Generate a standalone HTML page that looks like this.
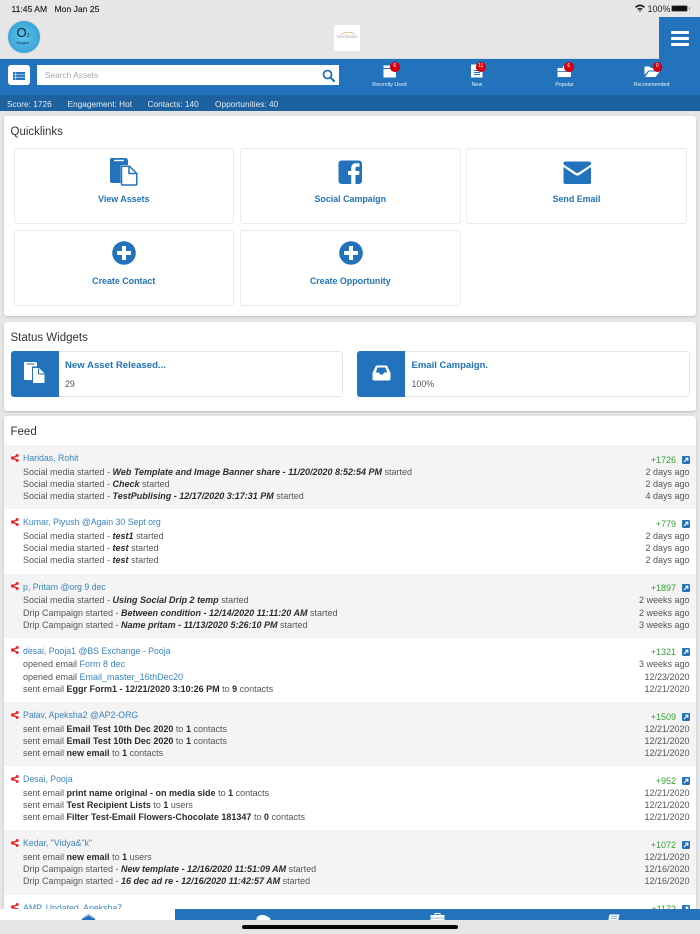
<!DOCTYPE html>
<html><head><meta charset="utf-8">
<style>
html,body{margin:0;padding:0}
body{width:700px;height:934px;position:relative;overflow:hidden;background:#e6e6e6;font-family:"Liberation Sans",sans-serif;color:#555}
div,svg{position:absolute}
.t{white-space:nowrap;line-height:12px}
.card{background:#fff;border-radius:3px;box-shadow:0 1px 2px rgba(0,0,0,.18)}
.h{font-size:11.5px;color:#333;left:10.5px;white-space:nowrap;line-height:14px}
.q{background:#fff;border:1px solid #ebebeb;border-radius:3px;box-sizing:border-box;height:76px}
.ql{position:absolute;left:0;right:0;top:44px;text-align:center;font-weight:bold;font-size:8.9px;line-height:12px;color:#2273bb}
.row{left:0;width:692px;height:64.2px}
.g{background:#f4f4f4}
.n{left:19px;top:7px;font-size:8.75px;color:#3a83c0;line-height:12px;white-space:nowrap}
.l{left:19px;font-size:9px;color:#555;line-height:12px;white-space:nowrap}
.l b{color:#2c2c2c}
.l a{color:#3a83c0}
.r{right:6.5px;font-size:9px;color:#555;line-height:12px;white-space:nowrap}
.s{right:20px;top:8.5px;font-size:9px;color:#33a033;line-height:12px;white-space:nowrap}
.l1{top:20.5px}.l2{top:33px}.l3{top:45px}
.nl{color:#fff;font-size:5.3px;line-height:8px;text-align:center;width:80px;top:80.5px;opacity:.9}
.b{width:9.5px;height:9.5px;border-radius:50%;background:#d00010;color:#fff;font-size:5px;line-height:9.5px;text-align:center;top:62px}
.top{color:#fff;font-size:8.3px;top:97.5px;line-height:12px;white-space:nowrap;opacity:.88}
</style></head><body>

<!-- status bar -->
<div class="t" style="left:11.5px;top:2.5px;font-size:8.6px;color:#222;-webkit-text-stroke:.15px #222">11:45 AM</div>
<div class="t" style="left:54.5px;top:2.5px;font-size:8.6px;color:#222;-webkit-text-stroke:.15px #222">Mon Jan 25</div>
<svg style="left:635px;top:4px" width="10" height="9" viewBox="0 0 10 9"><path d="M0 2.8C3-.3 7-.3 10 2.8L8.8 4C6.5 1.9 3.5 1.9 1.2 4Z M2.2 5C4 3.5 6 3.5 7.8 5L6.6 6.1C5.5 5.3 4.5 5.3 3.4 6.1Z M4 7L5 6.3 6 7 5 8.2Z" fill="#222"/></svg>
<div class="t" style="left:647.5px;top:2.5px;font-size:9px;color:#222">100%</div>
<div style="left:671px;top:4.5px;width:17px;height:7.5px;border-radius:2px;background:#111;border:.5px solid #999;box-sizing:border-box"></div>
<div style="left:688.5px;top:6.5px;width:1px;height:3.5px;background:#999"></div>

<!-- logos -->
<div style="left:8px;top:21px;width:32px;height:32px;border-radius:50%;background:radial-gradient(circle at 48% 50%,#5cc4ea 0,#3aa5d8 70%,#2f93c6 85%,#c9c9c9 100%);box-shadow:0 0 1px #999"></div>
<div class="t" style="left:16.5px;top:25px;font-size:13px;line-height:16px;color:#123">O<span style="font-size:5.5px">2</span></div>
<div class="t" style="left:16.5px;top:40px;font-size:3.6px;line-height:6px;color:#124">Oxygen</div>
<div style="left:334px;top:25px;width:26px;height:26px;background:#fff"></div>
<div class="t" style="left:335px;top:34px;width:24px;overflow:hidden;font-size:4.3px;line-height:6px;color:#aaa;text-align:center">mindmatrix</div>
<svg style="left:340px;top:31px" width="16" height="4" viewBox="0 0 16 4"><path d="M1 3.5Q8 -1 15 3" stroke="#e9b27a" stroke-width=".7" fill="none"/></svg>

<!-- blue nav -->
<div style="left:0;top:57.5px;width:700px;height:38px;background:#2273bb;border-top:1px solid #cfd9e3;box-sizing:border-box"></div>
<div style="left:659px;top:16.5px;width:41px;height:42px;background:#2273bb"></div>
<div style="left:670.5px;top:30.5px;width:18px;height:3px;background:#fff;border-radius:1px"></div>
<div style="left:670.5px;top:37px;width:18px;height:3px;background:#fff;border-radius:1px"></div>
<div style="left:670.5px;top:43px;width:18px;height:3px;background:#fff;border-radius:1px"></div>

<div style="left:7.5px;top:65px;width:22.5px;height:20px;background:#fff;border-radius:3px"></div>
<svg style="left:13px;top:71.5px" width="12" height="8" viewBox="0 0 12 8"><path d="M0 0h12v8H0z" fill="#2273bb"/><path d="M0 2.5h12M0 5.2h12M2.8 0v8" stroke="#fff" stroke-width=".6"/></svg>
<div style="left:37px;top:65px;width:302px;height:20px;background:#fff"></div>
<div class="t" style="left:45px;top:69px;font-size:8.3px;color:#a9a9a9">Search Assets</div>
<svg style="left:322px;top:68.5px" width="13" height="13" viewBox="0 0 13 13"><circle cx="5.5" cy="5.5" r="4" fill="none" stroke="#2273bb" stroke-width="1.8"/><path d="M8.5 8.5L12 12" stroke="#2273bb" stroke-width="2.2" stroke-linecap="round"/></svg>

<!-- nav items -->
<svg style="left:383px;top:64px" width="14" height="14" viewBox="0 0 14 14"><path d="M0.5 1.5h12v2.5h-12z" fill="#fff"/><path d="M0.5 5h12.5v8.5h-12.5z" fill="#fff"/></svg>
<div class="b" style="left:390px">6</div>
<div class="nl" style="left:349.5px">Recently Used</div>
<svg style="left:470px;top:64px" width="14" height="14" viewBox="0 0 14 14"><path d="M1 0.5h11.5v13H1z" fill="#fff"/><path d="M4 6.5h6M4 8.5h6M4 10.5h6" stroke="#2273bb" stroke-width=".9"/></svg>
<div class="b" style="left:476px">11</div>
<div class="nl" style="left:437px">New</div>
<svg style="left:557px;top:64px" width="15" height="14" viewBox="0 0 15 14"><path d="M0.5 4h13.5v9H0.5z" fill="#fff"/><path d="M0.5 7.5h13.5" stroke="#2273bb" stroke-width=".8"/><path d="M6 2h6v2H6z" fill="#fff"/></svg>
<div class="b" style="left:564px">6</div>
<div class="nl" style="left:524.5px">Popular</div>
<svg style="left:644px;top:64px" width="16" height="14" viewBox="0 0 16 14"><path d="M0.5 2.5h5l1.5 1.5h5v2.5H4.5L0.5 11Z" fill="#fff"/><path d="M5 7.5h10.5L11.5 13H1Z" fill="#fff"/></svg>
<div class="b" style="left:652.5px">0</div>
<div class="nl" style="left:611.5px">Recommended</div>

<!-- sub bar -->
<div style="left:0;top:95px;width:700px;height:16px;background:#1d629f"></div>
<div class="top" style="left:7px">Score: 1726</div>
<div class="top" style="left:67.5px">Engagement: Hot</div>
<div class="top" style="left:147.5px">Contacts: 140</div>
<div class="top" style="left:215px">Opportunities: 40</div>

<!-- Quicklinks -->
<div class="card" style="left:4px;top:116px;width:692px;height:200px"></div>
<div class="h" style="top:125px">Quicklinks</div>

<div class="q" style="left:13.5px;top:148px;width:220.5px"><div class="ql">View Assets</div>
<svg style="left:95.5px;top:9px" width="28" height="28" viewBox="0 0 28 28"><path d="M0 1.5Q0 0 1.5 0H15Q18 0 18 3V7H10.5V25H2Q0 25 0 23Z" fill="#2273bb"/><path d="M4 2.5H14" stroke="#fff" stroke-width="1.4"/><path d="M11.5 8.2H19.5L26.8 15.5V26Q26.8 27 25.8 27H12.5Q11.5 27 11.5 26Z" fill="#fff" stroke="#2273bb" stroke-width="1.5"/><path d="M19 8.5V15.5H26.5" fill="none" stroke="#2273bb" stroke-width="1.5"/></svg></div>
<div class="q" style="left:240px;top:148px;width:220.5px"><div class="ql">Social Campaign</div>
<svg style="left:97px;top:10.5px" width="25" height="25" viewBox="0 0 25 25"><path d="M4 .5H20.5Q24 .5 24 4V20.5Q24 24 20.5 24H17.5V15H21L21.5 11H17.5V8.5Q17.5 6.8 19.3 6.8H21.5V3.2H18Q13.2 3.2 13.2 8V11H10V15H13.2V24H4Q.5 24 .5 20.5V4Q.5 .5 4 .5Z" fill="#2273bb"/></svg></div>
<div class="q" style="left:466px;top:148px;width:221px"><div class="ql">Send Email</div>
<svg style="left:95.5px;top:12px" width="29" height="24" viewBox="0 0 29 24"><path d="M.5 2.5Q.5 .5 2.5 .5H26Q28 .5 28 2.5V3.5L15.8 11.5Q14.3 12.5 12.8 11.5L.5 3.5Z" fill="#2273bb"/><path d="M.5 6L11.8 13.8Q14.3 15.5 16.8 13.8L28 6V21.5Q28 23 26 23H2.5Q.5 23 .5 21.5Z" fill="#2273bb"/></svg></div>

<div class="q" style="left:13.5px;top:230px;width:220.5px"><div class="ql">Create Contact</div>
<svg style="left:97.5px;top:10px" width="24" height="24" viewBox="0 0 24 24"><circle cx="12" cy="12" r="11.8" fill="#2273bb"/><path d="M12 5V19M5 12H19" stroke="#fff" stroke-width="4"/></svg></div>
<div class="q" style="left:240px;top:230px;width:220.5px"><div class="ql">Create Opportunity</div>
<svg style="left:97.5px;top:10px" width="24" height="24" viewBox="0 0 24 24"><circle cx="12" cy="12" r="11.8" fill="#2273bb"/><path d="M12 5V19M5 12H19" stroke="#fff" stroke-width="4"/></svg></div>

<!-- Status widgets -->
<div class="card" style="left:4px;top:321.5px;width:692px;height:89px"></div>
<div class="h" style="top:331px">Status Widgets</div>

<div style="left:10.5px;top:351px;width:332.5px;height:46px;background:#fff;border:1px solid #e6e6e6;border-radius:3px;box-sizing:border-box"></div>
<div style="left:10.5px;top:351px;width:48px;height:46px;background:#2273bb;border-radius:3px 0 0 3px"></div>
<svg style="left:24px;top:362px" width="21" height="22" viewBox="0 0 21 22"><path d="M0 1Q0 0 1 0H11Q13 0 13 2V4.5H8V18H1Q0 18 0 17Z" fill="#fff"/><path d="M2.5 2h8" stroke="#2273bb" stroke-width="1"/><path d="M9 6H15L20.5 11.5V21H9Z" fill="#fff"/><path d="M14.5 6.500V12H20.5" fill="none" stroke="#2273bb" stroke-width="1"/></svg>
<div class="t" style="left:65px;top:359.5px;font-size:9.6px;font-weight:bold;color:#2273bb">New Asset Released...</div>
<div class="t" style="left:65px;top:377.5px;font-size:8.9px;color:#555">29</div>

<div style="left:357px;top:351px;width:332.5px;height:46px;background:#fff;border:1px solid #e6e6e6;border-radius:3px;box-sizing:border-box"></div>
<div style="left:357px;top:351px;width:47.5px;height:46px;background:#2273bb;border-radius:3px 0 0 3px"></div>
<svg style="left:371.5px;top:365px" width="19" height="16" viewBox="0 0 19 16"><path d="M4 .5H15L18.5 8V14Q18.5 15.5 17 15.5H2Q.5 15.5 .5 14V8Z" fill="#fff"/><path d="M3.8 7.5L5.5 2.5H13.5L15.2 7.5H12L11 9.5H8L7 7.5Z" fill="#2273bb"/></svg>
<div class="t" style="left:411.5px;top:359.5px;font-size:9.5px;font-weight:bold;color:#2273bb">Email Campaign.</div>
<div class="t" style="left:411.5px;top:377.5px;font-size:8.9px;color:#555">100%</div>

<!-- Feed -->
<div class="card" style="left:4px;top:416px;width:692px;height:510px;overflow:hidden"></div>
<div class="h" style="top:425px">Feed</div>

<svg width="0" height="0" style="left:0;top:0"><defs>
<symbol id="sh" viewBox="0 0 8 8"><circle cx="1.7" cy="4" r="1.7" fill="#e8282c"/><circle cx="6.2" cy="1.5" r="1.5" fill="#e8282c"/><circle cx="6.2" cy="6.5" r="1.5" fill="#e8282c"/><path d="M1.7 4L6.2 1.5M1.7 4L6.2 6.5" stroke="#e8282c" stroke-width="1.3"/></symbol>
<symbol id="ex" viewBox="0 0 8 8"><rect width="8" height="8" rx="1.2" fill="#2273bb"/><path d="M2 6L5.5 2.5M3.3 2.2H5.8V4.7" stroke="#fff" stroke-width="1.1" fill="none"/></symbol>
</defs></svg>

<div style="left:4px;top:445.3px;width:692px;height:475px;overflow:hidden">

<div class="row g" style="top:0">
<svg style="left:6.5px;top:8.5px" width="8" height="8"><use href="#sh"/></svg>
<div class="n">Haridas, Rohit</div><div class="s">+1726</div>
<svg style="left:678px;top:10.5px" width="8" height="8"><use href="#ex"/></svg>
<div class="l l1">Social media started - <b><i>Web Template and Image Banner share - 11/20/2020 8:52:54 PM</i></b> started</div><div class="r l1">2 days ago</div>
<div class="l l2">Social media started - <b><i>Check</i></b> started</div><div class="r l2">2 days ago</div>
<div class="l l3">Social media started - <b><i>TestPublising - 12/17/2020 3:17:31 PM</i></b> started</div><div class="r l3">4 days ago</div>
</div>

<div class="row" style="top:64.2px">
<svg style="left:6.5px;top:8.5px" width="8" height="8"><use href="#sh"/></svg>
<div class="n">Kumar, Piyush @Again 30 Sept org</div><div class="s">+779</div>
<svg style="left:678px;top:10.5px" width="8" height="8"><use href="#ex"/></svg>
<div class="l l1">Social media started - <b><i>test1</i></b> started</div><div class="r l1">2 days ago</div>
<div class="l l2">Social media started - <b><i>test</i></b> started</div><div class="r l2">2 days ago</div>
<div class="l l3">Social media started - <b><i>test</i></b> started</div><div class="r l3">2 days ago</div>
</div>

<div class="row g" style="top:128.4px">
<svg style="left:6.5px;top:8.5px" width="8" height="8"><use href="#sh"/></svg>
<div class="n">p, Pritam @org 9 dec</div><div class="s">+1897</div>
<svg style="left:678px;top:10.5px" width="8" height="8"><use href="#ex"/></svg>
<div class="l l1">Social media started - <b><i>Using Social Drip 2 temp</i></b> started</div><div class="r l1">2 weeks ago</div>
<div class="l l2">Drip Campaign started - <b><i>Between condition - 12/14/2020 11:11:20 AM</i></b> started</div><div class="r l2">2 weeks ago</div>
<div class="l l3">Drip Campaign started - <b><i>Name pritam - 11/13/2020 5:26:10 PM</i></b> started</div><div class="r l3">3 weeks ago</div>
</div>

<div class="row" style="top:192.6px">
<svg style="left:6.5px;top:8.5px" width="8" height="8"><use href="#sh"/></svg>
<div class="n">desai, Pooja1 @BS Exchange - Pooja</div><div class="s">+1321</div>
<svg style="left:678px;top:10.5px" width="8" height="8"><use href="#ex"/></svg>
<div class="l l1">opened email <a>Form 8 dec</a></div><div class="r l1">3 weeks ago</div>
<div class="l l2">opened email <a>Email_master_16thDec20</a></div><div class="r l2">12/23/2020</div>
<div class="l l3">sent email <b>Eggr Form1 - 12/21/2020 3:10:26 PM</b> to <b>9</b> contacts</div><div class="r l3">12/21/2020</div>
</div>

<div class="row g" style="top:256.8px">
<svg style="left:6.5px;top:8.5px" width="8" height="8"><use href="#sh"/></svg>
<div class="n">Palav, Apeksha2 @AP2-ORG</div><div class="s">+1509</div>
<svg style="left:678px;top:10.5px" width="8" height="8"><use href="#ex"/></svg>
<div class="l l1">sent email <b>Email Test 10th Dec 2020</b> to <b>1</b> contacts</div><div class="r l1">12/21/2020</div>
<div class="l l2">sent email <b>Email Test 10th Dec 2020</b> to <b>1</b> contacts</div><div class="r l2">12/21/2020</div>
<div class="l l3">sent email <b>new email</b> to <b>1</b> contacts</div><div class="r l3">12/21/2020</div>
</div>

<div class="row" style="top:321px">
<svg style="left:6.5px;top:8.5px" width="8" height="8"><use href="#sh"/></svg>
<div class="n">Desai, Pooja</div><div class="s">+952</div>
<svg style="left:678px;top:10.5px" width="8" height="8"><use href="#ex"/></svg>
<div class="l l1">sent email <b>print name original - on media side</b> to <b>1</b> contacts</div><div class="r l1">12/21/2020</div>
<div class="l l2">sent email <b>Test Recipient Lists</b> to <b>1</b> users</div><div class="r l2">12/21/2020</div>
<div class="l l3">sent email <b>Filter Test-Email Flowers-Chocolate 181347</b> to <b>0</b> contacts</div><div class="r l3">12/21/2020</div>
</div>

<div class="row g" style="top:385.2px">
<svg style="left:6.5px;top:8.5px" width="8" height="8"><use href="#sh"/></svg>
<div class="n">Kedar, "Vidya&amp;"k"</div><div class="s">+1072</div>
<svg style="left:678px;top:10.5px" width="8" height="8"><use href="#ex"/></svg>
<div class="l l1">sent email <b>new email</b> to <b>1</b> users</div><div class="r l1">12/21/2020</div>
<div class="l l2">Drip Campaign started - <b><i>New template - 12/16/2020 11:51:09 AM</i></b> started</div><div class="r l2">12/16/2020</div>
<div class="l l3">Drip Campaign started - <b><i>16 dec ad re - 12/16/2020 11:42:57 AM</i></b> started</div><div class="r l3">12/16/2020</div>
</div>

<div class="row" style="top:449.4px">
<svg style="left:6.5px;top:8.5px" width="8" height="8"><use href="#sh"/></svg>
<div class="n">AMP, Updated, Apeksha7</div><div class="s">+1172</div>
<svg style="left:678px;top:10.5px" width="8" height="8"><use href="#ex"/></svg>
</div>
</div>

<!-- bottom nav -->
<div style="left:0;top:909px;width:175px;height:11px;background:#fff;overflow:hidden">
<svg style="left:81.5px;top:5px" width="13" height="8" viewBox="0 0 13 8"><path d="M0 4L6.5 0L13 4V8H0Z" fill="#2273bb"/><path d="M0 4.5L6.5 1L13 4.5" stroke="#fff" stroke-width=".6" fill="none"/></svg></div>
<div style="left:175px;top:909px;width:525px;height:11px;background:#2273bb;overflow:hidden">
<svg style="left:80.5px;top:5.5px" width="15" height="7" viewBox="0 0 15 7"><ellipse cx="6.5" cy="4" rx="6" ry="4" fill="#fff"/><ellipse cx="12" cy="5" rx="2.5" ry="3" fill="#fff"/></svg>
<svg style="left:255px;top:3.5px" width="15" height="8" viewBox="0 0 15 8"><path d="M5 2V.5H10V2" fill="none" stroke="#fff"/><path d="M.5 2H14.5V8H.5Z" fill="#fff"/><path d="M.5 5H14.5" stroke="#2273bb" stroke-width=".5"/></svg>
<svg style="left:431.5px;top:4.5px" width="13" height="8" viewBox="0 0 13 8"><path d="M2.5 .5H12.5L11 8H1Z" fill="#fff"/><path d="M4 2.5H10.5M3.5 4.5H10" stroke="#2273bb" stroke-width=".6"/></svg>
</div>
<div style="left:0;top:920px;width:700px;height:14px;background:#e6e6e6"></div>
<div style="left:242px;top:924.5px;width:216px;height:4px;border-radius:2px;background:#0a0a0a"></div>
</body></html>
